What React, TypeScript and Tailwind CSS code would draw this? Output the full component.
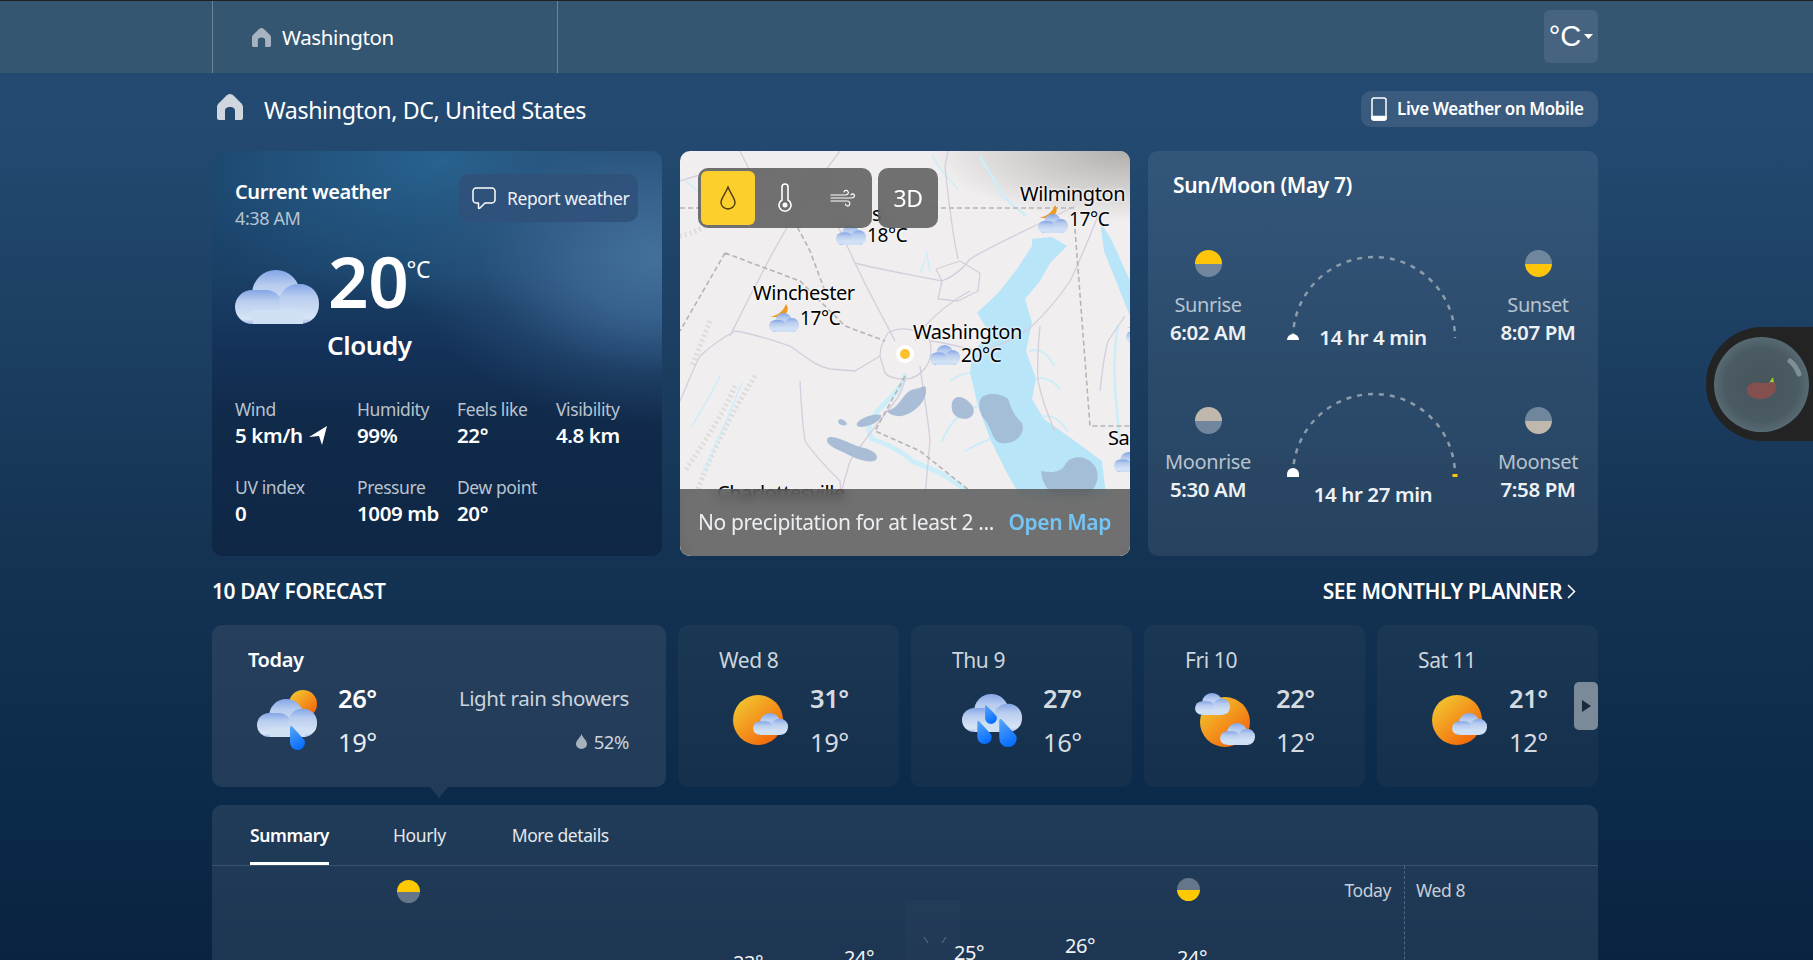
const stats = [
  { label: 'Wind', value: '5 km/h', arrow: true },
  { label: 'Humidity', value: '99%' },
  { label: 'Feels like', value: '22°' },
  { label: 'Visibility', value: '4.8 km' },
  { label: 'UV index', value: '0' },
  { label: 'Pressure', value: '1009 mb' },
  { label: 'Dew point', value: '20°' }
];

const days = [
  { day: 'Wed 8', high: '31°', low: '19°', icon: 'sun' },
  { day: 'Thu 9', high: '27°', low: '16°', icon: 'rain' },
  { day: 'Fri 10', high: '22°', low: '12°', icon: 'clouds' },
  { day: 'Sat 11', high: '21°', low: '12°', icon: 'sun' }
];

const mapLabels = [
  { name: 'Wilmington', temp: '17°C', left: 340, top: 31, moon: true },
  { name: 'Winchester', temp: '17°C', left: 73, top: 130, moon: true, iconGap: 16 },
  { name: 'Washington', temp: '20°C', left: 233, top: 169, moon: false, iconGap: 17 }
];

const chartTemps = [
  { temp: '23°', left: 521, top: 83 },
  { temp: '24°', left: 632, top: 78 },
  { temp: '25°', left: 742, top: 73 },
  { temp: '26°', left: 853, top: 66 },
  { temp: '24°', left: 965, top: 78 }
];

function Gradients() {
  return (
    <svg className="absolute w-0 h-0">
      <defs>
        <linearGradient id="cloudFill" x1="0" y1="0" x2="0" y2="1">
          <stop offset="0" stopColor="#84a6e8" />
          <stop offset="0.32" stopColor="#b8cdee" />
          <stop offset="0.85" stopColor="#d8e5f6" />
          <stop offset="1" stopColor="#a0bcec" />
        </linearGradient>
        <linearGradient id="sunFill" x1="0.15" y1="0.1" x2="0.85" y2="0.9">
          <stop offset="0" stopColor="#f2c22e" />
          <stop offset="1" stopColor="#f4660a" />
        </linearGradient>
        <linearGradient id="dropFill" x1="0" y1="0" x2="0.4" y2="1">
          <stop offset="0" stopColor="#5ba6f5" />
          <stop offset="1" stopColor="#0a70ff" />
        </linearGradient>
        <radialGradient id="mapCorner" cx="1" cy="0" r="1">
          <stop offset="0" stopColor="#8f8b88" stopOpacity="0.65" />
          <stop offset="1" stopColor="#8f8b88" stopOpacity="0" />
        </radialGradient>
      </defs>
    </svg>
  );
}

function Cloud({ x = 0, y = 0, w = 84, h = 54 }: { x?: number; y?: number; w?: number; h?: number }) {
  return (
    <svg x={x} y={y} width={w} height={h} viewBox="0 0 84 54" preserveAspectRatio="none">
      <circle cx="41" cy="24" r="24" fill="url(#cloudFill)" />
      <rect x="0" y="20" width="48" height="34" rx="17" fill="url(#cloudFill)" />
      <rect x="44" y="14" width="40" height="40" rx="19" fill="url(#cloudFill)" />
      <rect x="18" y="40" width="50" height="14" fill="#cfdff4" />
    </svg>
  );
}

function Drop({ x, y, w, h }: { x: number; y: number; w: number; h: number }) {
  return (
    <svg x={x} y={y} width={w} height={h} viewBox="0 0 15 24">
      <path d="M0 1.5C0 0 1.2-.4 2.2.6L12.6 12C14.2 13.6 15 15 15 16.5A7.5 7.5 0 0 1 0 16.5Z" fill="url(#dropFill)" />
    </svg>
  );
}

function SunCloud() {
  return (
    <svg width="56" height="50" viewBox="0 0 56 50">
      <circle cx="25" cy="25" r="25" fill="url(#sunFill)" />
      <Cloud x={20} y={18} w={35} h={22} />
    </svg>
  );
}

function TwoClouds() {
  return (
    <svg width="60" height="55" viewBox="0 0 60 55">
      <circle cx="30" cy="29" r="25" fill="url(#sunFill)" />
      <Cloud x={0} y={0} w={35} h={22} />
      <Cloud x={25} y={30} w={35} h={22} />
    </svg>
  );
}

function HeavyRain() {
  return (
    <svg width="60" height="53" viewBox="0 0 60 53">
      <Cloud x={0} y={0} w={60} h={38} />
      <svg x="23" y="11" width="12" height="19" viewBox="0 0 15 24">
        <path d="M2 1L12.6 12C14.2 13.6 15 15 15 16.5A7.5 7.5 0 0 1 0 16.5V2C0 .5 1-.2 2 1Z" fill="url(#dropFill)" />
      </svg>
      <Drop x={15} y={27} w={15} h={23} />
      <Drop x={37} y={25} w={18} h={28} />
    </svg>
  );
}

function ShowerIcon() {
  return (
    <svg width="60" height="60" viewBox="0 0 60 60">
      <circle cx="46" cy="14" r="14" fill="url(#sunFill)" />
      <Cloud x={0} y={9} w={60} h={38} />
      <Drop x={33} y={36} w={15} h={24} />
    </svg>
  );
}

function MoonCloud() {
  return (
    <svg width="30" height="28" viewBox="0 0 30 28">
      <path d="M17 0C21 5 18 12 10 13H1C6 12 14 9 17 0Z" fill="#ee9a1e" />
      <Cloud x={0} y={9} w={30} h={19} />
    </svg>
  );
}

function SmallCloud() {
  return (
    <svg width="30" height="20" viewBox="0 0 30 20">
      <Cloud x={0} y={0} w={30} h={20} />
    </svg>
  );
}

function HomeIcon({ size, color }: { size: number; color: string }) {
  return (
    <svg width={size} height={size} viewBox="0 0 26 26">
      <path
        d="M13 0C15 0 16 1 17 2L24 9C25.5 10.5 26 12 26 13V24C26 25 25 26 24 26H18V17C18 14 16 13 13 13C10 13 8 14 8 17V26H2C1 26 0 25 0 24V13C0 12 .5 10.5 2 9L9 2C10 1 11 0 13 0Z"
        fill={color}
      />
    </svg>
  );
}

function HalfDisc({ top, bottom, size }: { top: string; bottom: string; size: string }) {
  return (
    <div className={`${size} rounded-full overflow-hidden flex flex-col shrink-0`}>
      <div className={`flex-1 ${top}`} />
      <div className={`flex-1 ${bottom}`} />
    </div>
  );
}

function Arc({ moonEnd }: { moonEnd?: boolean }) {
  return (
    <svg width="178" height="86" viewBox="0 0 178 86" className="shrink-0">
      <path d="M9 83A81 81 0 0 1 171 83" fill="none" stroke="#8c9cab" strokeWidth="2.5" strokeDasharray="5 6" />
      {moonEnd ? (
        <>
          <path d="M3 85V82A6 6 0 0 1 15 82V85Z" fill="#fff" />
          <rect x="168.500" y="82" width="5" height="3" fill="#fec50a" />
        </>
      ) : (
        <path d="M3 85A6 6 0 0 1 15 85Z" fill="#fff" />
      )}
    </svg>
  );
}

function SunMoonRow({
  left,
  leftTime,
  right,
  rightTime,
  duration,
  arcClass,
  textClass,
  tone,
  moon
}: {
  left: string;
  leftTime: string;
  right: string;
  rightTime: string;
  duration: string;
  arcClass: string;
  textClass: string;
  tone: string;
  moon?: boolean;
}) {
  return (
    <div className="grid grid-cols-[120px_1fr_120px] h-[96px]">
      <div className="flex flex-col items-center">
        <HalfDisc top={tone} bottom="bg-[#6f869c]" size="w-[27px] h-[27px]" />
        <div className="text-[20px] leading-6 mt-[16px] text-[#b7c3cf]">{left}</div>
        <div className="text-[20.500px] leading-[26px] mt-[2px] font-semibold text-[#eef1f4]">{leftTime}</div>
      </div>
      <div className={`flex flex-col items-center ${arcClass}`}>
        <Arc moonEnd={moon} />
        <div className={`text-[20.500px] leading-6 font-semibold text-[#eef1f4] ${textClass}`}>{duration}</div>
      </div>
      <div className="flex flex-col items-center">
        <HalfDisc top="bg-[#6f869c]" bottom={tone} size="w-[27px] h-[27px]" />
        <div className="text-[20px] leading-6 mt-[16px] text-[#b7c3cf]">{right}</div>
        <div className="text-[20.500px] leading-[26px] mt-[2px] font-semibold text-[#eef1f4]">{rightTime}</div>
      </div>
    </div>
  );
}

function MapArt() {
  return (
    <svg className="absolute inset-0" width="450" height="405" viewBox="0 0 450 405">
      <rect width="450" height="405" fill="#f0eeee" />
      <rect x="250" width="200" height="70" fill="url(#mapCorner)" />
      <g fill="none" stroke="#d9d7d7" strokeWidth="5" strokeDasharray="2 3" opacity="0.8">
        <path d="M75 225C60 250 40 280 15 345" />
        <path d="M55 235C45 260 25 290 5 320" />
        <path d="M30 170L12 215" />
        <path d="M0 85C12 82 30 78 35 60" />
      </g>
      <path
        d="M352 88L372 86L387 95L370 112L360 130L345 148L352 172L346 200L356 228L352 248L364 268L392 288L422 310L426 345H340L327 322L310 288L298 255L290 222L292 202L310 182L297 162L318 142L337 118L352 95Z"
        fill="#b9e5f8"
      />
      <path d="M420 70L432 90L450 130V165L436 130L424 100Z" fill="#b9e5f8" />
      <g fill="none" stroke="#cdedf9" strokeLinecap="round" strokeLinejoin="round">
        <path d="M300 6C306 16 315 28 322 44C330 52 338 58 345 64" strokeWidth="2.500" />
        <path d="M252 4C256 12 262 22 278 38" strokeWidth="1.500" />
        <path d="M225 225C222 240 205 250 196 262C190 272 186 280 192 288C204 292 220 298 232 310C245 316 265 320 292 345" strokeWidth="5" />
        <path d="M350 200C360 196 368 204 374 214M356 228C364 226 372 228 380 238M362 266C372 262 380 270 388 280" strokeWidth="2" />
        <path d="M290 222C282 222 276 226 270 230M298 255C288 258 272 266 262 290M310 288C300 292 292 296 285 300" strokeWidth="2" />
        <path d="M40 225C30 245 20 262 12 275M62 232C48 265 36 295 24 320M246 100L250 120M245 110L240 122M6 30L30 50" strokeWidth="1.500" />
        <path d="M438 175C434 200 432 220 440 290" strokeWidth="2.500" />
      </g>
      <g fill="none" stroke="#d4cedc" strokeWidth="1.300" strokeLinejoin="round">
        <path d="M140 32C150 60 165 90 175 112C188 140 205 170 215 190" />
        <path d="M175 112C205 120 235 124 262 130C275 125 285 115 290 108C310 95 350 78 395 55" />
        <path d="M278 108C272 80 268 45 265 15L268 0" />
        <path d="M235 190C240 178 262 155 290 140" />
        <path d="M262 130L256 118L280 110L300 122L298 140L278 150L258 148Z" />
        <path d="M200 205C200 195 204 188 208 182C215 178 224 177 232 179C242 182 248 186 250 190C252 200 250 210 246 216C240 224 232 228 225 228C216 228 208 226 205 222Z" />
        <path d="M0 250C8 232 14 216 20 205C32 194 44 186 55 180C75 183 95 190 110 195C125 205 135 215 150 218L175 220L200 205" />
        <path d="M50 185C60 165 68 148 78 130C88 110 98 92 105 80C114 65 122 52 130 40L160 0" />
        <path d="M120 230C121 250 122 270 125 290C135 305 150 320 160 330L161 345" />
        <path d="M225 228C222 238 220 245 215 250C200 270 182 292 170 310L160 345" />
        <path d="M240 215C243 240 248 265 250 290L245 345" />
        <path d="M250 190C270 192 285 198 300 200C320 195 338 186 352 175C368 160 380 145 390 130C400 110 410 85 420 60" />
        <path d="M0 30C18 24 34 20 50 18C85 22 120 26 150 30M60 0L70 20" />
        <path d="M360 175C358 195 357 212 358 230C362 248 368 265 375 280M420 240C422 220 424 205 428 190L445 165" />
      </g>
      <g fill="none" stroke="#b6b4b4" strokeWidth="1.600" strokeDasharray="5 3">
        <path d="M0 57H120M245 57H395" />
        <path d="M395 78L410 275H450" />
        <path d="M45 102L0 180M45 102L120 130L165 175L205 190" />
        <path d="M225 225L195 280L240 300L290 340" />
        <path d="M110 62L130 100L145 140" />
      </g>
      <g fill="#a3bbd5" opacity="0.92">
        <path d="M207 260C222 256 222 240 235 238C245 236 246 232 246 240C246 250 235 262 222 265C214 266 208 262 207 260Z" />
        <path d="M272 252C274 244 282 245 288 250C296 256 296 266 286 268C276 268 270 262 272 252Z" />
        <path d="M300 250C302 240 322 242 328 248C332 258 332 262 342 272C346 282 336 294 322 292C312 292 312 276 304 268C300 262 298 256 300 250Z" />
        <path d="M147 288C150 282 165 290 180 296C192 298 200 304 196 309C190 313 176 308 165 302C156 298 146 294 147 288Z" />
        <path d="M177 272C182 266 194 262 201 264C202 270 190 275 182 276C178 276 176 275 177 272Z" />
        <path d="M158 270C160 266 166 270 167 273C165 276 158 274 158 270Z" />
        <path d="M361 320C372 322 382 322 386 312C392 304 406 304 414 314C422 324 416 340 405 345H375C366 338 362 330 361 320Z" />
      </g>
    </svg>
  );
}

function MapLabel({ name, temp, left, top, moon, iconGap = 18 }: { name: string; temp: string; left: number; top: number; moon: boolean; iconGap?: number }) {
  return (
    <div className="absolute flex flex-col text-black leading-[24px] [text-shadow:0_0_3px_#fff,0_0_3px_#fff]" style={{ left, top }}>
      <div className="text-[20px]">{name}</div>
      <div className="flex items-center -mt-[1px] text-[19px]" style={{ paddingLeft: iconGap }}>
        {moon ? <MoonCloud /> : <SmallCloud />}
        <span className="ml-[1px]">{temp}</span>
      </div>
    </div>
  );
}

function MapCard() {
  return (
    <div className="relative w-[450px] h-full rounded-[10px] overflow-hidden">
      <MapArt />
      {mapLabels.map((l) => (
        <MapLabel key={l.name} {...l} />
      ))}
      <div className="absolute left-[156px] top-[72px] flex items-center text-black text-[19px] leading-[24px] [text-shadow:0_0_3px_#fff,0_0_3px_#fff]">
        <SmallCloud />
        <span className="ml-[1px]">18°C</span>
      </div>
      <div className="absolute left-[192px] top-[51px] text-black text-[20px] leading-[24px]">s</div>
      <div className="absolute left-[428px] top-[275px] text-black text-[20px] leading-[24px] [text-shadow:0_0_3px_#fff]">Sa</div>
      <div className="absolute left-[434px] top-[301px]">
        <SmallCloud />
      </div>
      <div className="absolute left-[446px] top-[164px]">
        <MoonCloud />
      </div>
      <div className="absolute left-[37px] top-[330px] text-black text-[20px] leading-[24px]">Charlottesville</div>
      <div className="absolute left-[216px] top-[194px] w-[18px] h-[18px] rounded-full bg-white flex items-center justify-center">
        <div className="w-[10px] h-[10px] rounded-full bg-[#fbc02d]" />
      </div>

      <div className="absolute left-[18px] top-[17px] flex gap-[6px]">
        <div className="w-[174px] h-[60px] rounded-[10px] bg-[#505050]/80 backdrop-blur-sm flex items-center pl-[3px]">
          <div className="w-[54px] h-[54px] rounded-[6px] bg-[#fdcf2c] flex items-center justify-center">
            <svg width="16" height="24" viewBox="0 0 16 24" fill="none" stroke="#4a3c10" strokeWidth="1.400">
              <path d="M8 1C6 7 1 12 1 16.500A7 6.500 0 0 0 15 16.500C15 12 10 7 8 1Z" />
            </svg>
          </div>
          <div className="w-[60px] flex justify-center">
            <svg width="14" height="30" viewBox="0 0 14 30" fill="none" stroke="#fff" strokeWidth="1.600">
              <path d="M4 17V4A3 3 0 0 1 10 4V17A6 6 0 1 1 4 17Z" />
              <circle cx="7" cy="22" r="2.500" fill="#fff" stroke="none" />
            </svg>
          </div>
          <div className="w-[54px] flex justify-center">
            <svg width="25" height="18" viewBox="0 0 25 18" fill="none" stroke="#fff" strokeWidth="1.200" strokeLinecap="round">
              <path d="M1 6H15C18 6 19 4 18 2.500C17 1 14.500 1 14 3" />
              <path d="M1 9H21C24 9 25 7 24 5.500C23 4.500 21.500 4.500 21 6" />
              <path d="M1 12H17C20 12 20.500 15 19 16.500C17.500 17.500 15.500 16.500 15.500 15" />
            </svg>
          </div>
        </div>
        <div className="w-[60px] h-[60px] rounded-[10px] bg-[#505050]/80 backdrop-blur-sm flex items-center justify-center text-white text-[23px]">3D</div>
      </div>

      <div className="absolute left-0 right-0 bottom-0 h-[67px] bg-[#505050]/80 backdrop-blur-[6px] flex items-center justify-between pl-[18px] pr-[19px]">
        <span className="text-[21px] text-[#eceff2] whitespace-nowrap">No precipitation for at least 2 ...</span>
        <span className="text-[21px] font-semibold text-[#74c5f5] whitespace-nowrap">Open Map</span>
      </div>
    </div>
  );
}

function CurrentCard() {
  return (
    <div className="w-[450px] h-full rounded-[10px] pl-[23px] pr-[24px] pt-[24px] text-white bg-[radial-gradient(ellipse_260px_170px_at_450px_105px,#44709c_0%,#37628e_35%,rgba(50,90,130,0.35)_70%,transparent_100%),radial-gradient(ellipse_320px_150px_at_230px_10px,#28628e_0%,rgba(40,98,142,0.45)_60%,transparent_100%),linear-gradient(180deg,#183c62_0%,#1a4066_30%,#14325a_48%,#102a4a_66%,#0f2745_100%)]">
      <div className="flex justify-between items-start">
        <div className="pt-[4px]">
          <div className="text-[20px] leading-[26px] font-semibold">Current weather</div>
          <div className="text-[18px] leading-[22px] mt-[2px] text-[#b8c4d0]">4:38 AM</div>
        </div>
        <div className="w-[179px] h-[48px] rounded-[10px] bg-[#30517a]/90 flex items-center pl-[13px] gap-[11px] -mt-[1px]">
          <svg width="24" height="23" viewBox="0 0 24 23" fill="none" stroke="#fff" strokeWidth="1.500" strokeLinejoin="round" className="shrink-0">
            <path d="M4 1H20C21.500 1 23 2.500 23 4V13C23 14.500 21.500 16 20 16H13L8 21C7 22 6.500 21.500 6.500 20.500V16H4C2.500 16 1 14.500 1 13V4C1 2.500 2.500 1 4 1Z" />
          </svg>
          <span className="text-[17.500px] whitespace-nowrap text-[#eef1f4]">Report weather</span>
        </div>
      </div>
      <div className="flex mt-[16px] items-start">
        <svg width="84" height="54" viewBox="0 0 84 54" className="mt-[25px]">
          <Cloud />
        </svg>
        <div className="ml-[9px]">
          <div className="flex items-start">
            <span className="text-[71px] leading-[72px] font-semibold">20</span>
            <span className="text-[23px] leading-[24px] mt-[12px] -ml-[2px]">°C</span>
          </div>
          <div className="text-[26px] leading-[34px] font-semibold -ml-[1px] mt-[11px]">Cloudy</div>
        </div>
      </div>
      <div className="grid grid-cols-[122px_100px_99px_1fr] gap-y-[27px] mt-[35px]">
        {stats.map((s) => (
          <div key={s.label}>
            <div className="text-[17.500px] leading-6 text-[#b9c3ce] whitespace-nowrap">{s.label}</div>
            <div className="text-[20.500px] leading-[26px] mt-[1px] font-semibold flex items-center gap-[6px] whitespace-nowrap">
              {s.value}
              {s.arrow && (
                <svg width="18" height="19" viewBox="0 0 18 19">
                  <path d="M18 0L0 11L10 10L13 19Z" fill="#fff" />
                </svg>
              )}
            </div>
          </div>
        ))}
      </div>
    </div>
  );
}

function SunMoonCard() {
  return (
    <div className="w-[450px] h-full rounded-[10px] pt-[20px] bg-[linear-gradient(180deg,#33567a_0%,#26425f_100%)] text-white">
      <div className="pl-[25px] text-[21px] leading-7 font-semibold">Sun/Moon (May 7)</div>
      <div className="mt-[51px]">
        <SunMoonRow
          left="Sunrise"
          leftTime="6:02 AM"
          right="Sunset"
          rightTime="8:07 PM"
          duration="14 hr 4 min"
          arcClass="mt-[5px]"
          textClass="-mt-[16px]"
          tone="bg-[#fec50a]"
        />
      </div>
      <div className="mt-[61px]">
        <SunMoonRow
          left="Moonrise"
          leftTime="5:30 AM"
          right="Moonset"
          rightTime="7:58 PM"
          duration="14 hr 27 min"
          arcClass="-mt-[15px]"
          textClass="mt-[4px]"
          tone="bg-[#c0b8ad]"
          moon
        />
      </div>
    </div>
  );
}

function DayCard({ day, high, low, icon }: { day: string; high: string; low: string; icon: string }) {
  return (
    <div className="w-[221px] h-full rounded-[10px] bg-[linear-gradient(180deg,#1a3754_0%,#15304c_100%)] pt-[23px]">
      <div className="pl-[41px] text-[21px] leading-6 text-[#ced5dc]">{day}</div>
      <div className="flex items-center pl-[51px] mt-[8px] gap-[21px]">
        <div className="w-[60px] flex justify-end">
          {icon === 'sun' && <SunCloud />}
          {icon === 'rain' && <HeavyRain />}
          {icon === 'clouds' && <TwoClouds />}
        </div>
        <div className="flex flex-col gap-2 text-[25.500px] leading-9 text-[#d5dae0]">
          <span className="font-semibold">{high}</span>
          <span>{low}</span>
        </div>
      </div>
    </div>
  );
}

export default function App() {
  return (
    <div className="relative h-[960px] overflow-hidden font-['Noto_Sans',sans-serif] tracking-[-0.025em] text-white bg-[linear-gradient(180deg,#244b72_0%,#234970_15%,#133150_62%,#0b2a49_84%,#0a2340_100%)]">
      <Gradients />
      <div className="h-[73px] bg-[#345671] border-t border-[#222]">
        <div className="ml-[212px] w-[1386px] h-full flex items-center justify-between">
          <div className="w-[346px] h-full border-x border-[#6c8498] flex items-center pl-[39px] gap-[11px]">
            <HomeIcon size={19} color="#a6b4c2" />
            <span className="text-[20.500px] pt-[1px]">Washington</span>
          </div>
          <div className="w-[54px] h-[53px] rounded-[6px] bg-[#466380] flex items-center justify-center gap-[3px] font-['Liberation_Sans',sans-serif] tracking-normal text-[29px] mb-[1px]">
            °C
            <svg width="9" height="5" viewBox="0 0 9 5">
              <path d="M0 0H9L4.500 5Z" fill="#fff" />
            </svg>
          </div>
        </div>
      </div>

      <div className="ml-[212px] w-[1386px]">
        <div className="h-[78px] pb-[4px] flex items-center justify-between">
          <div className="flex items-center gap-[21px]">
            <div className="-mt-[6px] ml-[5px]">
              <HomeIcon size={26} color="#cfd6de" />
            </div>
            <span className="text-[23.250px]">Washington, DC, United States</span>
          </div>
          <div className="w-[237px] h-[36px] rounded-[10px] bg-[#3a5b7d] flex items-center pl-[10px] gap-[10px] -mt-[2px]">
            <svg width="16" height="24" viewBox="0 0 16 24" fill="none" stroke="#fff" strokeWidth="1.500">
              <rect x="1" y="1" width="14" height="22" rx="2" />
              <path d="M1 19.500H15V21C15 22 14 23 13 23H3C2 23 1 22 1 21Z" fill="#fff" />
            </svg>
            <span className="text-[17px] font-semibold whitespace-nowrap">Live Weather on Mobile</span>
          </div>
        </div>

        <div className="h-[405px] flex gap-[18px]">
          <CurrentCard />
          <MapCard />
          <SunMoonCard />
        </div>

        <div className="h-[69px] pt-[2px] flex items-center justify-between">
          <span className="text-[21px] font-semibold">10 DAY FORECAST</span>
          <div className="flex items-center gap-[5px] mr-[22px] font-semibold text-[21px]">
            SEE MONTHLY PLANNER
            <svg width="9" height="15" viewBox="0 0 9 15" fill="none" stroke="#fff" strokeWidth="1.500">
              <path d="M1 1L7.500 7.500L1 14" />
            </svg>
          </div>
        </div>

        <div className="relative h-[162px] flex gap-3">
          <div className="relative w-[454px] h-full rounded-[10px] bg-[linear-gradient(180deg,#263f5d_0%,#213b58_100%)] pt-[23px]">
            <div className="pl-[36px] text-[20px] leading-6 font-semibold">Today</div>
            <div className="flex items-center pl-[45px] pr-[37px] mt-[8px]">
              <ShowerIcon />
              <div className="flex flex-col gap-2 ml-[21px] text-[25.500px] leading-9">
                <span className="font-semibold">26°</span>
                <span className="text-[#e8ebee]">19°</span>
              </div>
              <div className="ml-auto flex flex-col items-end gap-[20px] text-[#cdd4db] -mt-[1px]">
                <span className="text-[20.500px] leading-6 whitespace-nowrap">Light rain showers</span>
                <span className="flex items-center gap-[7px] text-[18.500px] leading-6">
                  <svg width="11" height="15" viewBox="0 0 11 15">
                    <path d="M5.500 0C4 4 0 6.500 0 10A5.500 5 0 0 0 11 10C11 6.500 7 4 5.500 0Z" fill="#a8b2bd" />
                  </svg>
                  52%
                </span>
              </div>
            </div>
            <div className="absolute left-[218px] top-full w-[18px] h-[11px] bg-[#213b58] [clip-path:polygon(0_0,100%_0,50%_100%)]" />
          </div>
          {days.map((d) => (
            <DayCard key={d.day} {...d} />
          ))}
          <div className="absolute right-0 top-[57px] w-[24px] h-[48px] rounded-[5px] bg-[#7b8a99] flex items-center justify-center">
            <svg width="9" height="12" viewBox="0 0 9 12">
              <path d="M0 0L9 6L0 12Z" fill="#1a2a3b" />
            </svg>
          </div>
        </div>

        <div className="mt-[18px] rounded-t-[10px] bg-[linear-gradient(180deg,#203c59_0%,#1c324e_100%)] h-[260px]">
          <div className="h-[61px] border-b border-[#3a546e] flex pl-[38px] gap-[64px] text-[17.500px]">
            <div className="h-[60px] flex items-center font-semibold border-b-[3px] border-white pt-[3px]">Summary</div>
            <div className="flex items-center h-[60px] text-[#e4e8ec]">Hourly</div>
            <div className="flex items-center h-[60px] text-[#e4e8ec] ml-[2px]">More details</div>
          </div>
          <div className="relative h-[199px]">
            <div className="absolute left-[185px] top-[14px]">
              <HalfDisc top="bg-[#fdc900]" bottom="bg-[#65758a]" size="w-[23px] h-[23px]" />
            </div>
            <div className="absolute left-[965px] top-[12px]">
              <HalfDisc top="bg-[#65758a]" bottom="bg-[#fdc900]" size="w-[23px] h-[23px]" />
            </div>
            <div className="absolute right-[207px] top-[12px] text-[17.500px] leading-6 text-[#c7cfd7]">Today</div>
            <div className="absolute left-[1204px] top-[12px] text-[17.500px] leading-6 text-[#c7cfd7]">Wed 8</div>
            <div className="absolute left-[1192px] top-0 h-full border-l border-dashed border-[#4f6780]" />
            <div className="absolute left-[693px] top-[34px] w-[55px] h-[100px] bg-white/[0.02]" />
            <svg className="absolute left-[710px] top-[70px]" width="26" height="10" viewBox="0 0 26 10" fill="none" stroke="#65727f" strokeWidth="1">
              <path d="M2 1L6 7M24 1L20 7" />
            </svg>
            {chartTemps.map((t) => (
              <div key={t.left} className="absolute text-[20px] leading-7 text-[#f1f3f5]" style={{ left: t.left, top: t.top }}>
                {t.temp}
              </div>
            ))}
          </div>
        </div>
      </div>

      <div className="absolute right-0 top-[327px] w-[107px] h-[114px] rounded-l-full bg-[#232323] flex items-center pl-[8px]">
        <div className="relative w-[95px] h-[95px] rounded-full bg-[radial-gradient(circle,#47555c_0%,#4b5b63_55%,#6e8590_100%)]">
          <svg className="absolute inset-0" width="95" height="95" viewBox="0 0 95 95">
            <path d="M76 24C80 27 83 32 85 37" stroke="#9fb0b5" strokeWidth="5" strokeLinecap="round" fill="none" opacity="0.6" />
            <path d="M55 46L59 40L60 46Z" fill="#9dd52c" />
            <path d="M33 52C34 46 42 44 48 46C54 47 60 42 62 48C64 56 54 63 45 62C37 61 32 58 33 52Z" fill="#84504f" />
          </svg>
        </div>
      </div>
    </div>
  );
}
